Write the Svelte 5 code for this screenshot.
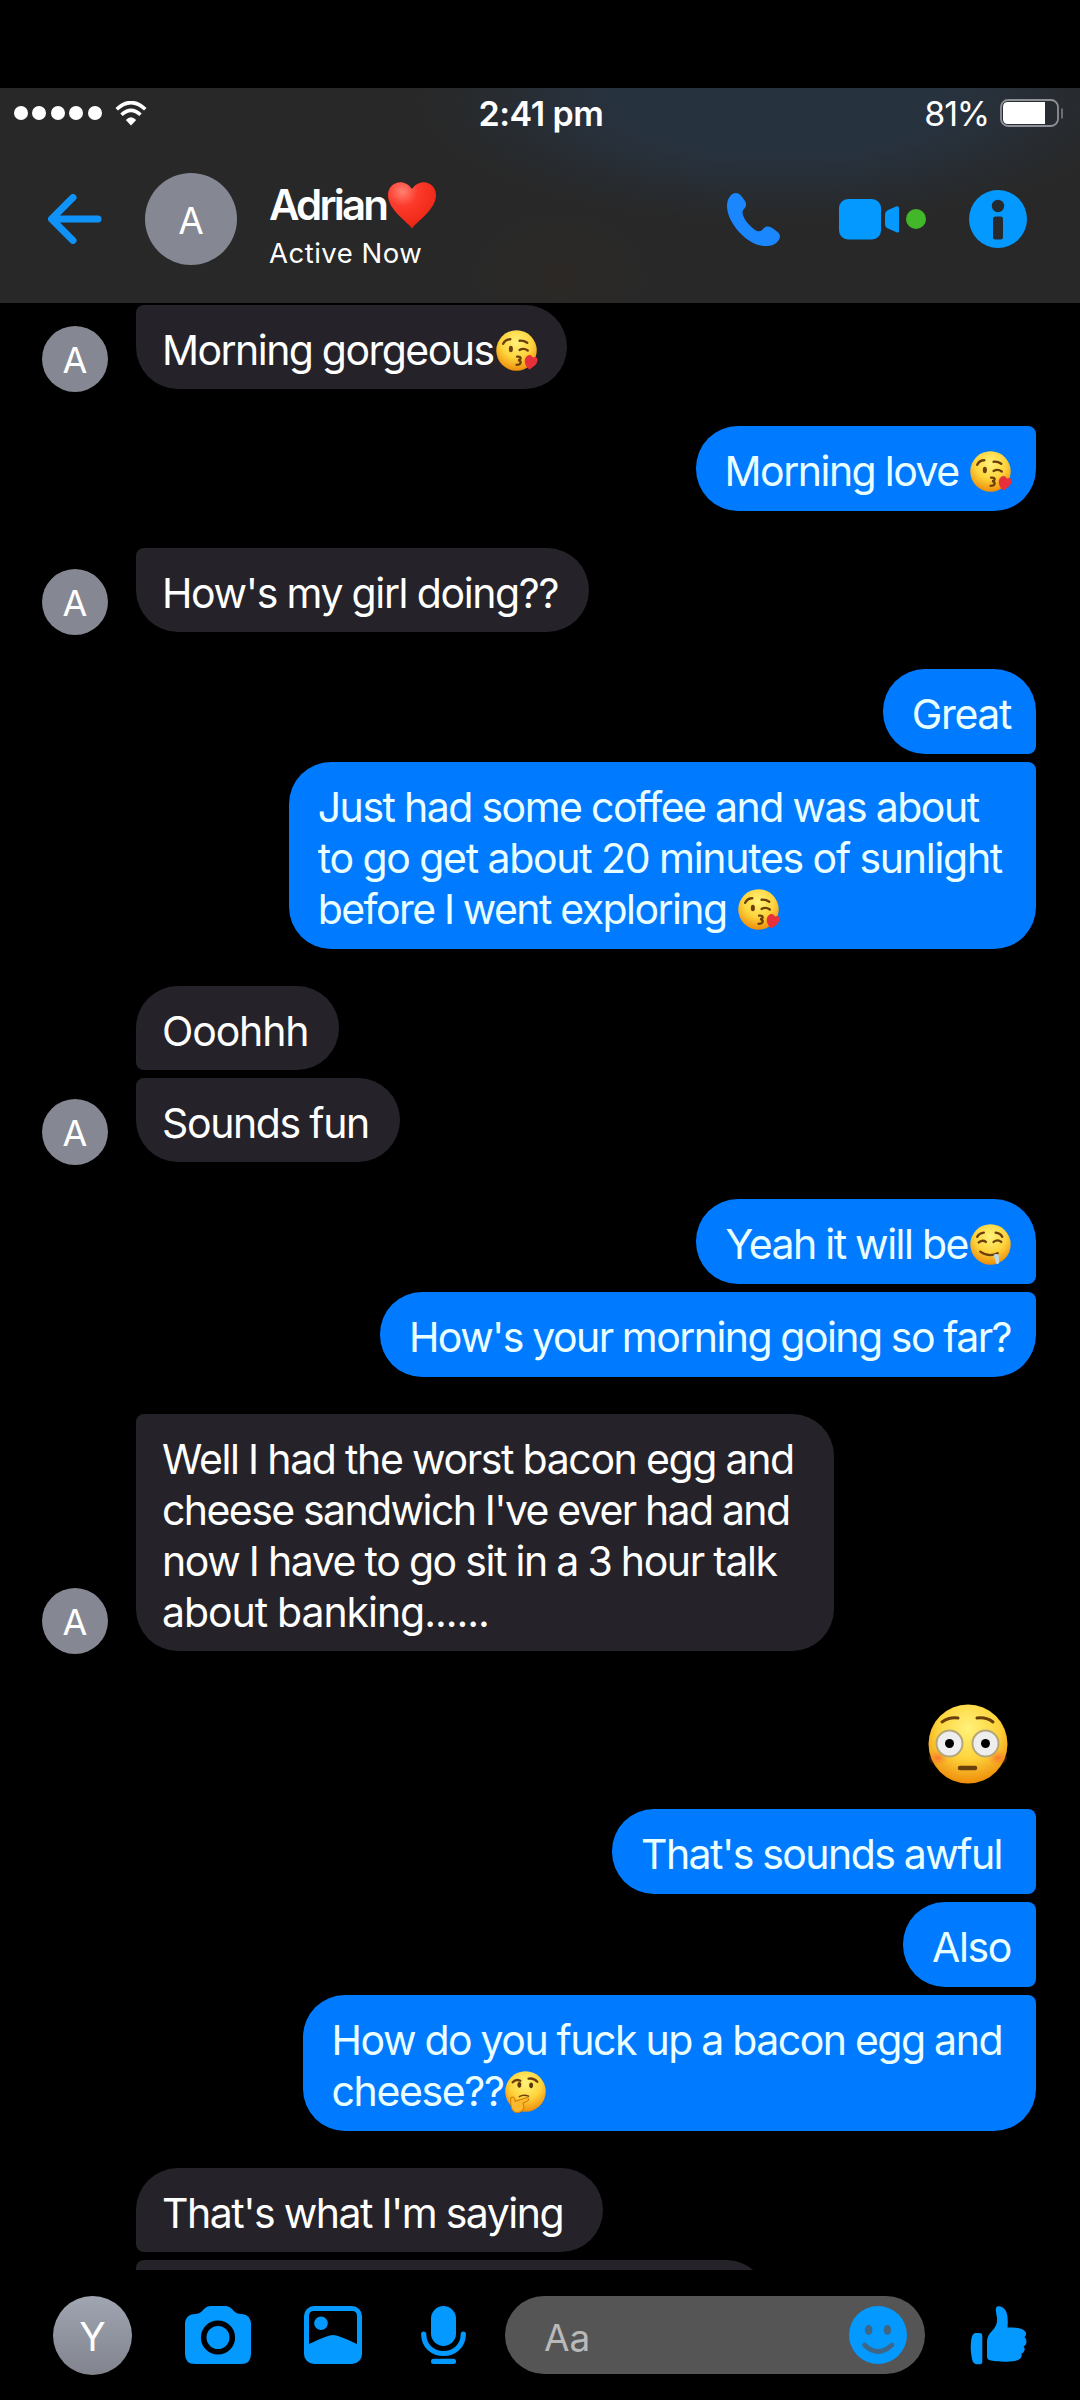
<script lang="ts">
    type Emoji = "kiss" | "drool" | "flushed" | "think";

    interface Line {
        text: string;
        emoji?: Emoji;
        // letter spacing in px, where it differs from the default
        tracking?: number;
    }

    interface Message {
        lines: Line[];
        // which corners on the sender's side are squared off
        joined?: "top" | "bottom" | "both";
        trailing?: boolean;
    }

    interface Group {
        from: "them" | "me";
        messages: Message[];
        avatar?: boolean;
    }

    const DEFAULT_TRACKING = -1.38;

    const contact = { name: "Adrian", initial: "A", status: "Active Now" };

    const groups: Group[] = [
        {
            from: "them",
            avatar: true,
            messages: [{ lines: [{ text: "Morning gorgeous", emoji: "kiss", tracking: -1.54 }], joined: "top" }],
        },
        {
            from: "me",
            messages: [{ lines: [{ text: "Morning love ", emoji: "kiss", tracking: -1.5 }], joined: "top" }],
        },
        {
            from: "them",
            avatar: true,
            messages: [{ lines: [{ text: "How's my girl doing??" }], joined: "top" }],
        },
        {
            from: "me",
            messages: [
                { lines: [{ text: "Great" }], joined: "bottom" },
                {
                    lines: [
                        { text: "Just had some coffee and was about", tracking: -1.47 },
                        { text: "to go get about 20 minutes of sunlight", tracking: -1.28 },
                        { text: "before I went exploring ", emoji: "kiss", tracking: -1.56 },
                    ],
                    joined: "top",
                    trailing: true,
                },
            ],
        },
        {
            from: "them",
            avatar: true,
            messages: [
                { lines: [{ text: "Ooohhh", tracking: -1.15 }], joined: "bottom" },
                { lines: [{ text: "Sounds fun" }], joined: "top" },
            ],
        },
        {
            from: "me",
            messages: [
                { lines: [{ text: "Yeah it will be", emoji: "drool", tracking: -1.48 }], joined: "bottom" },
                { lines: [{ text: "How's your morning going so far?", tracking: -1.57 }], joined: "top" },
            ],
        },
        {
            from: "them",
            avatar: true,
            messages: [
                {
                    lines: [
                        { text: "Well I had the worst bacon egg and" },
                        { text: "cheese sandwich I've ever had and", tracking: -1.58 },
                        { text: "now I have to go sit in a 3 hour talk", tracking: -1.42 },
                        { text: "about banking......", tracking: -1.05 },
                    ],
                    joined: "top",
                    trailing: true,
                },
            ],
        },
        {
            from: "me",
            messages: [
                { lines: [{ text: "", emoji: "flushed" }] },
                { lines: [{ text: "That's sounds awful", tracking: -1.54 }], joined: "both", trailing: true },
                { lines: [{ text: "Also" }], joined: "both" },
                {
                    lines: [
                        { text: "How do you fuck up a bacon egg and", tracking: -1.49 },
                        { text: "cheese??", emoji: "think" },
                    ],
                    joined: "top",
                    trailing: true,
                },
            ],
        },
        {
            from: "them",
            messages: [
                { lines: [{ text: "That's what I'm saying", tracking: -1.48 }], joined: "bottom", trailing: true },
                { lines: [{ text: "" }], joined: "top" },
            ],
        },
    ];

    let draft = $state("");
</script>

{#snippet emoji(name: Emoji)}
    <svg class="emoji emoji--{name}" viewBox="0 0 80 80" role="img" aria-label={name}>
        <circle cx="40" cy="40" r="39.5" fill="url(#face)" />
        {#if name === "kiss"}
            <path d="M14 27q4-9 14-9M46 21q8-1 15 4" class="emoji__stroke" />
            <ellipse cx="29" cy="37" rx="4" ry="6.5" fill="#6b3f0b" />
            <path d="M46 39q8-5 16 1" class="emoji__stroke" />
            <path d="M41 52q8-1 7 4q-1 3-5 3q6 1 5 5q-1 4-8 4" class="emoji__stroke" />
            <path d="M65 77C54 68 54 55 61 50c5-3 10 0 11 4 4-3 9-1 9 4 0 9-7 13-16 19z" fill="#e8303a" />
        {:else if name === "drool"}
            <path d="M14 25q4-7 13-8M50 17q9 1 13 8" class="emoji__stroke" />
            <path d="M17 36q8-6 14-1M46 35q8-6 15 0" class="emoji__stroke" />
            <path d="M20 54q17 12 34 3" class="emoji__stroke" />
            <path d="M46 60q5-3 10 0l1 14q-1 5-4 4-3 0-3-5z" fill="#b9dbe6" />
        {:else if name === "think"}
            <path d="M15 22q6-7 15-3M46 15q10-2 17 6" class="emoji__stroke" />
            <ellipse cx="28" cy="27" rx="3.8" ry="5.5" fill="#5d3609" />
            <ellipse cx="51" cy="28" rx="3.8" ry="5.5" fill="#5d3609" />
            <path d="M28 50q8-5 18-1" class="emoji__stroke emoji__stroke--thin" />
            <path
                d="M11 56c0-7 7-7 8-1l1 4 21-7c6-1 7 5 2 7l-8 4c4 6 1 17-9 18-11 1-15-7-15-25z"
                fill="#fdb92e"
                stroke="#d07e0c"
                stroke-width="2"
            />
        {:else}
            <ellipse cx="10" cy="54" rx="10" ry="8" fill="url(#blush)" />
            <ellipse cx="70" cy="54" rx="10" ry="8" fill="url(#blush)" />
            <circle cx="21.5" cy="39.5" r="13" fill="#eee" stroke="#b5a77a" stroke-width="2" />
            <circle cx="57.5" cy="39.5" r="13" fill="#eee" stroke="#b5a77a" stroke-width="2" />
            <circle cx="21.5" cy="39.5" r="4.5" />
            <circle cx="57.5" cy="39.5" r="4.5" />
            <path d="M14 18q7-5 16-4M49 14q10-1 16 4" class="emoji__stroke emoji__stroke--thin" />
            <path d="M32 64h15" class="emoji__stroke" />
        {/if}
    </svg>
{/snippet}

<svg class="defs" width="0" height="0" aria-hidden="true">
    <defs>
        <radialGradient id="face" cx="0.5" cy="0.3" r="0.7">
            <stop offset="0" stop-color="#fff27a" />
            <stop offset="0.55" stop-color="#fed43c" />
            <stop offset="1" stop-color="#ee8d0a" />
        </radialGradient>
        <radialGradient id="blush">
            <stop offset="0" stop-color="#fb7433" stop-opacity="0.9" />
            <stop offset="1" stop-color="#fb8a33" stop-opacity="0" />
        </radialGradient>
        <radialGradient id="heart" cx="0.3" cy="0.2" r="0.9">
            <stop offset="0" stop-color="#ff8173" />
            <stop offset="0.35" stop-color="#fd3b2c" />
            <stop offset="1" stop-color="#e8210f" />
        </radialGradient>
    </defs>
</svg>

<div class="screen">
    <header class="top">
        <div class="status">
            <div class="status__left">
                <div class="status__dots">
                    {#each Array(5) as _}
                        <span></span>
                    {/each}
                </div>
                <svg width="32" height="25" viewBox="0 0 32 25" fill="none">
                    <path d="M1.7 8.2Q16-5 30.3 8.2" stroke="#fff" stroke-width="3.6" />
                    <path d="M6.5 13.8Q16 5 25.5 13.8" stroke="#fff" stroke-width="3.6" />
                    <path d="M10.8 19Q16 13.5 21.2 19L16 24.5z" fill="#fff" />
                </svg>
            </div>
            <span class="status__time">2:41 pm</span>
            <div class="status__right">
                <span>81%</span>
                <svg width="64" height="28" viewBox="0 0 64 28">
                    <rect x="1" y="1" width="57" height="26" rx="7" fill="none" stroke="#8e9196" stroke-width="1.8" />
                    <path d="M8 3H45V25H8Q3 25 3 20V8Q3 3 8 3z" fill="#fff" />
                    <path d="M62 9.5v10" stroke="#7c8187" stroke-width="1.6" />
                </svg>
            </div>
        </div>

        <div class="nav">
            <svg class="nav__back" width="54" height="50" viewBox="0 0 54 50">
                <path d="M25 3.5L3.5 25l21.5 21.5M4 25H50" />
            </svg>
            <div class="avatar avatar--large">{contact.initial}</div>
            <div class="nav__contact">
                <div class="nav__name">
                    {contact.name}
                    <svg width="48" height="48" viewBox="0 0 48 48" role="img" aria-label="heart">
                        <path
                            d="M24 47.5C20 41 0 29 0 14 0 1 16-4 24 8 32-4 48 1 48 14 48 29 28 41 24 47.5z"
                            fill="url(#heart)"
                        />
                    </svg>
                </div>
                <div class="nav__active">{contact.status}</div>
            </div>
            <div class="nav__actions">
                <svg width="53" height="53" viewBox="0 0 53 53" fill="#1b87ff">
                    <path
                        d="M0 13C0 6 4 0 9 0c4 0 6 4 9 8 2 4 1 6-1 8-3 3-1 7 2 12 3 4 7 8 11 10 4 1 5-1 7-3 4-3 7-1 11 2 6 4 6 7 3 11-4 5-9 5-14 5C20 52 0 30 0 13z"
                    />
                </svg>
                <div class="nav__video">
                    <svg width="60" height="41" viewBox="0 0 60 41" fill="#0399ff">
                        <rect width="42" height="40.5" rx="9" />
                        <path d="M49 11l8-3.5q3-1 3 1.5v23q0 2.5-3 1l-8-3.5q-3-1.5-3-4.5v-9q0-3.5 3-5z" />
                    </svg>
                    <span class="nav__online"></span>
                </div>
                <svg width="58" height="58" viewBox="0 0 58 58">
                    <circle cx="29" cy="29" r="29" fill="#0399ff" />
                    <circle cx="29" cy="16" r="6.2" fill="#262a2f" />
                    <rect x="24" y="26.5" width="10" height="23" rx="2.5" fill="#262a2f" />
                </svg>
            </div>
        </div>
    </header>

    <main class="thread">
        {#each groups as group}
            <div class="group group--{group.from}">
                {#if group.avatar}
                    <div class="avatar avatar--small">{contact.initial}</div>
                {/if}
                <div class="group__messages">
                    {#each group.messages as message}
                        {#if !message.joined}
                            {@render emoji("flushed")}
                        {:else}
                            <div
                                class="bubble bubble--{message.joined}"
                                class:bubble--trailing={message.trailing}
                                class:bubble--cut={message.lines[0].text === ""}
                            >
                                {#each message.lines as line}
                                    <div class="bubble__line" style:letter-spacing="{line.tracking ?? DEFAULT_TRACKING}px">{line.text}{#if line.emoji}{@render emoji(line.emoji)}{/if}</div>
                                {/each}
                            </div>
                        {/if}
                    {/each}
                </div>
            </div>
        {/each}
    </main>

    <footer class="composer">
        <div class="avatar avatar--self">Y</div>
        <svg class="composer__camera" width="66" height="58" viewBox="0 0 66 58">
            <path
                d="M10 8C15 8 17 5 19 3 21 1 23 0 26 0H40C43 0 45 1 47 3 49 5 51 8 56 8 62 8 66 12 66 18V48Q66 58 56 58H10Q0 58 0 48V18C0 12 4 8 10 8z"
            />
            <circle cx="33" cy="31.5" r="14.3" stroke="#000" stroke-width="5.6" />
        </svg>
        <svg class="composer__gallery" width="58" height="58" viewBox="0 0 58 58">
            <rect width="58" height="58" rx="10" />
            <path d="M10 5H48Q53 5 53 10V38Q34 29 29 29T5 38V10Q5 5 10 5z" fill="#000" />
            <circle cx="17" cy="17.3" r="6.8" />
        </svg>
        <svg class="composer__mic" width="45" height="58" viewBox="0 0 45 58">
            <rect x="10" width="25" height="40" rx="12.5" />
            <path d="M2.7 28C2.7 54 42.3 54 42.3 28" fill="none" stroke="#0399ff" stroke-width="5.2" stroke-linecap="round" />
            <rect x="10" y="52.8" width="25" height="5.2" rx="2.5" />
        </svg>
        <div class="composer__field">
            <input type="text" placeholder="Aa" aria-label="Message" bind:value={draft} />
            <svg width="58" height="58" viewBox="0 0 58 58">
                <circle cx="29" cy="29" r="29" />
                <ellipse cx="19.6" cy="24" rx="3.8" ry="5" fill="#3f6785" />
                <ellipse cx="38.4" cy="24" rx="3.8" ry="5" fill="#3f6785" />
                <path d="M15.5 39Q29 52 43 39" fill="none" stroke="#3f6785" stroke-width="4.6" stroke-linecap="round" />
            </svg>
        </div>
        <svg class="composer__like" width="58" height="59" viewBox="0 0 58 59">
            <path d="M5 27H10Q12.3 27 12.3 29.5V56Q12.3 58.3 10 58.3H6Q3.5 58 2.5 55 0 45 1 36 1.5 28 5 27z" />
            <path
                d="M17 50V36C17 31 19 28 22 25 26 21 27.5 17 27 12 26.5 8 25.5 5 26 2 26.5 0 29-.5 32 1 37 4 38.5 10 37.5 21.5 45 21.5 53 21.5 55.5 26 56.5 28 56 30 54.5 31 57.5 34 57 39 53.5 40.5 56 43 54 47 51.5 47.5 52.5 52 49 54 45 55 38 56 28 56 21 54.5 18 54 17 53 17 50z"
            />
        </svg>
    </footer>
</div>

<style>
    :global(body) {
        background: #000;
    }

    .defs {
        position: absolute;
    }

    .screen {
        box-sizing: border-box;
        width: 1080px;
        height: 2400px;
        padding-top: 88px;
        display: flex;
        flex-direction: column;
        overflow: hidden;
        background: #000;
        color: #fff;
        font-family: Inter, "Liberation Sans", sans-serif;
    }

    svg {
        display: block;
        flex-shrink: 0;
    }

    /* Header */

    .top {
        flex: none;
        height: 215px;
        background:
            radial-gradient(ellipse 360px 125px at 780px 10px, #27323f 45%, transparent),
            radial-gradient(ellipse 90px 70px at 560px 190px, #2c2926, transparent),
            #282828;
    }

    .status {
        height: 50px;
        display: grid;
        grid-template-columns: 1fr auto 1fr;
        align-items: center;
        padding: 0 16px 0 14px;
        font-size: 34px;
    }

    .status__left,
    .status__right {
        display: flex;
        align-items: center;
    }

    .status__left {
        gap: 13px;
    }

    .status__right {
        justify-content: flex-end;
        gap: 11px;
        letter-spacing: -1.2px;
    }

    .status__dots {
        display: flex;
        gap: 4.4px;
    }

    .status__dots span {
        width: 14px;
        height: 14px;
        border-radius: 50%;
        background: #fff;
    }

    .status__time {
        margin-left: 4px;
        font-weight: 600;
        letter-spacing: -0.5px;
    }

    .nav {
        height: 162px;
        display: flex;
        align-items: center;
        padding: 0 53px 0 48px;
    }

    .nav__back {
        fill: none;
        stroke: #1093f8;
        stroke-width: 7;
        stroke-linecap: round;
        stroke-linejoin: round;
        margin-right: 43px;
    }

    .nav__contact {
        margin-left: 32px;
        padding-top: 17px;
    }

    .nav__name {
        display: flex;
        align-items: center;
        gap: 2px;
        height: 48px;
        font-size: 42px;
        font-weight: 600;
        letter-spacing: -2.8px;
    }

    .nav__active {
        height: 46px;
        line-height: 48px;
        font-size: 27.5px;
        letter-spacing: 0.5px;
    }

    .nav__actions {
        display: flex;
        align-items: center;
        margin-left: auto;
    }

    .nav__video {
        display: flex;
        align-items: center;
        gap: 7px;
        margin: 0 43px 0 59px;
    }

    .nav__online {
        width: 20px;
        height: 20px;
        border-radius: 50%;
        background: #43b72a;
    }

    /* Avatars */

    .avatar {
        flex: none;
        display: flex;
        align-items: center;
        justify-content: center;
        box-sizing: border-box;
        padding-top: 2px;
        border-radius: 50%;
        background: #858892;
    }

    .avatar--large {
        width: 92px;
        height: 92px;
        font-size: 37px;
    }

    .avatar--small {
        width: 66px;
        height: 66px;
        margin: 0 28px -3px 0;
        font-size: 36px;
    }

    .avatar--self {
        width: 79px;
        height: 79px;
        font-size: 39px;
        background: linear-gradient(#a0a5b2, #81848d);
    }

    /* Thread */

    .thread {
        flex: none;
        box-sizing: border-box;
        height: 1967px;
        padding: 2px 44px 0 42px;
        display: flex;
        flex-direction: column;
        gap: 37px;
        overflow: hidden;
    }

    .group {
        flex: none;
        display: flex;
        align-items: flex-end;
    }

    .group--me {
        justify-content: flex-end;
    }

    .group--them:not(:has(.avatar)) {
        padding-left: 94px;
    }

    .group__messages {
        display: flex;
        flex-direction: column;
        align-items: flex-start;
        gap: 8px;
    }

    .group--me .group__messages {
        align-items: flex-end;
    }

    .bubble {
        padding: 20px 31px 13px 26px;
        border-radius: 42px;
        background: #252329;
        font-size: 41px;
        line-height: 51px;
        word-spacing: -0.6px;
    }

    .group--me .bubble {
        padding: 20px 25px 14px 29px;
        background: #007aff;
        color: #eaffff;
    }

    .group--them .bubble--trailing {
        padding-right: 40px;
    }

    .group--me .bubble--trailing {
        padding-right: 34px;
    }

    .bubble--cut {
        width: 575px;
        height: 51px;
    }

    .group--them .bubble--top,
    .group--them .bubble--both {
        border-top-left-radius: 8px;
    }

    .group--them .bubble--bottom,
    .group--them .bubble--both {
        border-bottom-left-radius: 8px;
    }

    .group--me .bubble--top,
    .group--me .bubble--both {
        border-top-right-radius: 8px;
    }

    .group--me .bubble--bottom,
    .group--me .bubble--both {
        border-bottom-right-radius: 8px;
    }

    .bubble__line {
        height: 51px;
        display: flex;
        align-items: center;
        white-space: pre;
    }

    /* Emoji */

    .emoji {
        width: 41px;
        height: 41px;
        margin-left: 2px;
        overflow: visible;
    }

    .group--them .bubble .emoji {
        margin-right: -1px;
    }

    .emoji--flushed {
        width: 80px;
        height: 80px;
        margin: 16px 28px 17px 0;
    }

    .emoji__stroke {
        fill: none;
        stroke: #6b3f0b;
        stroke-width: 4.5;
        stroke-linecap: round;
    }

    .emoji__stroke--thin {
        stroke-width: 3;
    }

    /* Composer */

    .composer {
        flex: 1;
        display: flex;
        align-items: center;
        padding: 0 52px 0 53px;
    }

    .composer svg {
        fill: #0399ff;
    }

    .composer__camera {
        margin-left: 53px;
    }

    .composer__gallery {
        margin-left: 53px;
    }

    .composer__mic {
        margin: 0 39px 0 59px;
    }

    .composer__field {
        flex: 1;
        min-width: 0;
        box-sizing: border-box;
        height: 78px;
        display: flex;
        align-items: center;
        padding: 0 18px 0 39px;
        border-radius: 39px;
        background: #555556;
    }

    .composer__field input {
        flex: 1;
        min-width: 0;
        padding: 5px 0 0;
        border: none;
        outline: none;
        background: none;
        color: #fff;
        font: 37px Inter, "Liberation Sans", sans-serif;
    }

    .composer__field input::placeholder {
        color: #b9b9ba;
        opacity: 1;
    }

    .composer__like {
        margin-left: 45px;
    }
</style>
